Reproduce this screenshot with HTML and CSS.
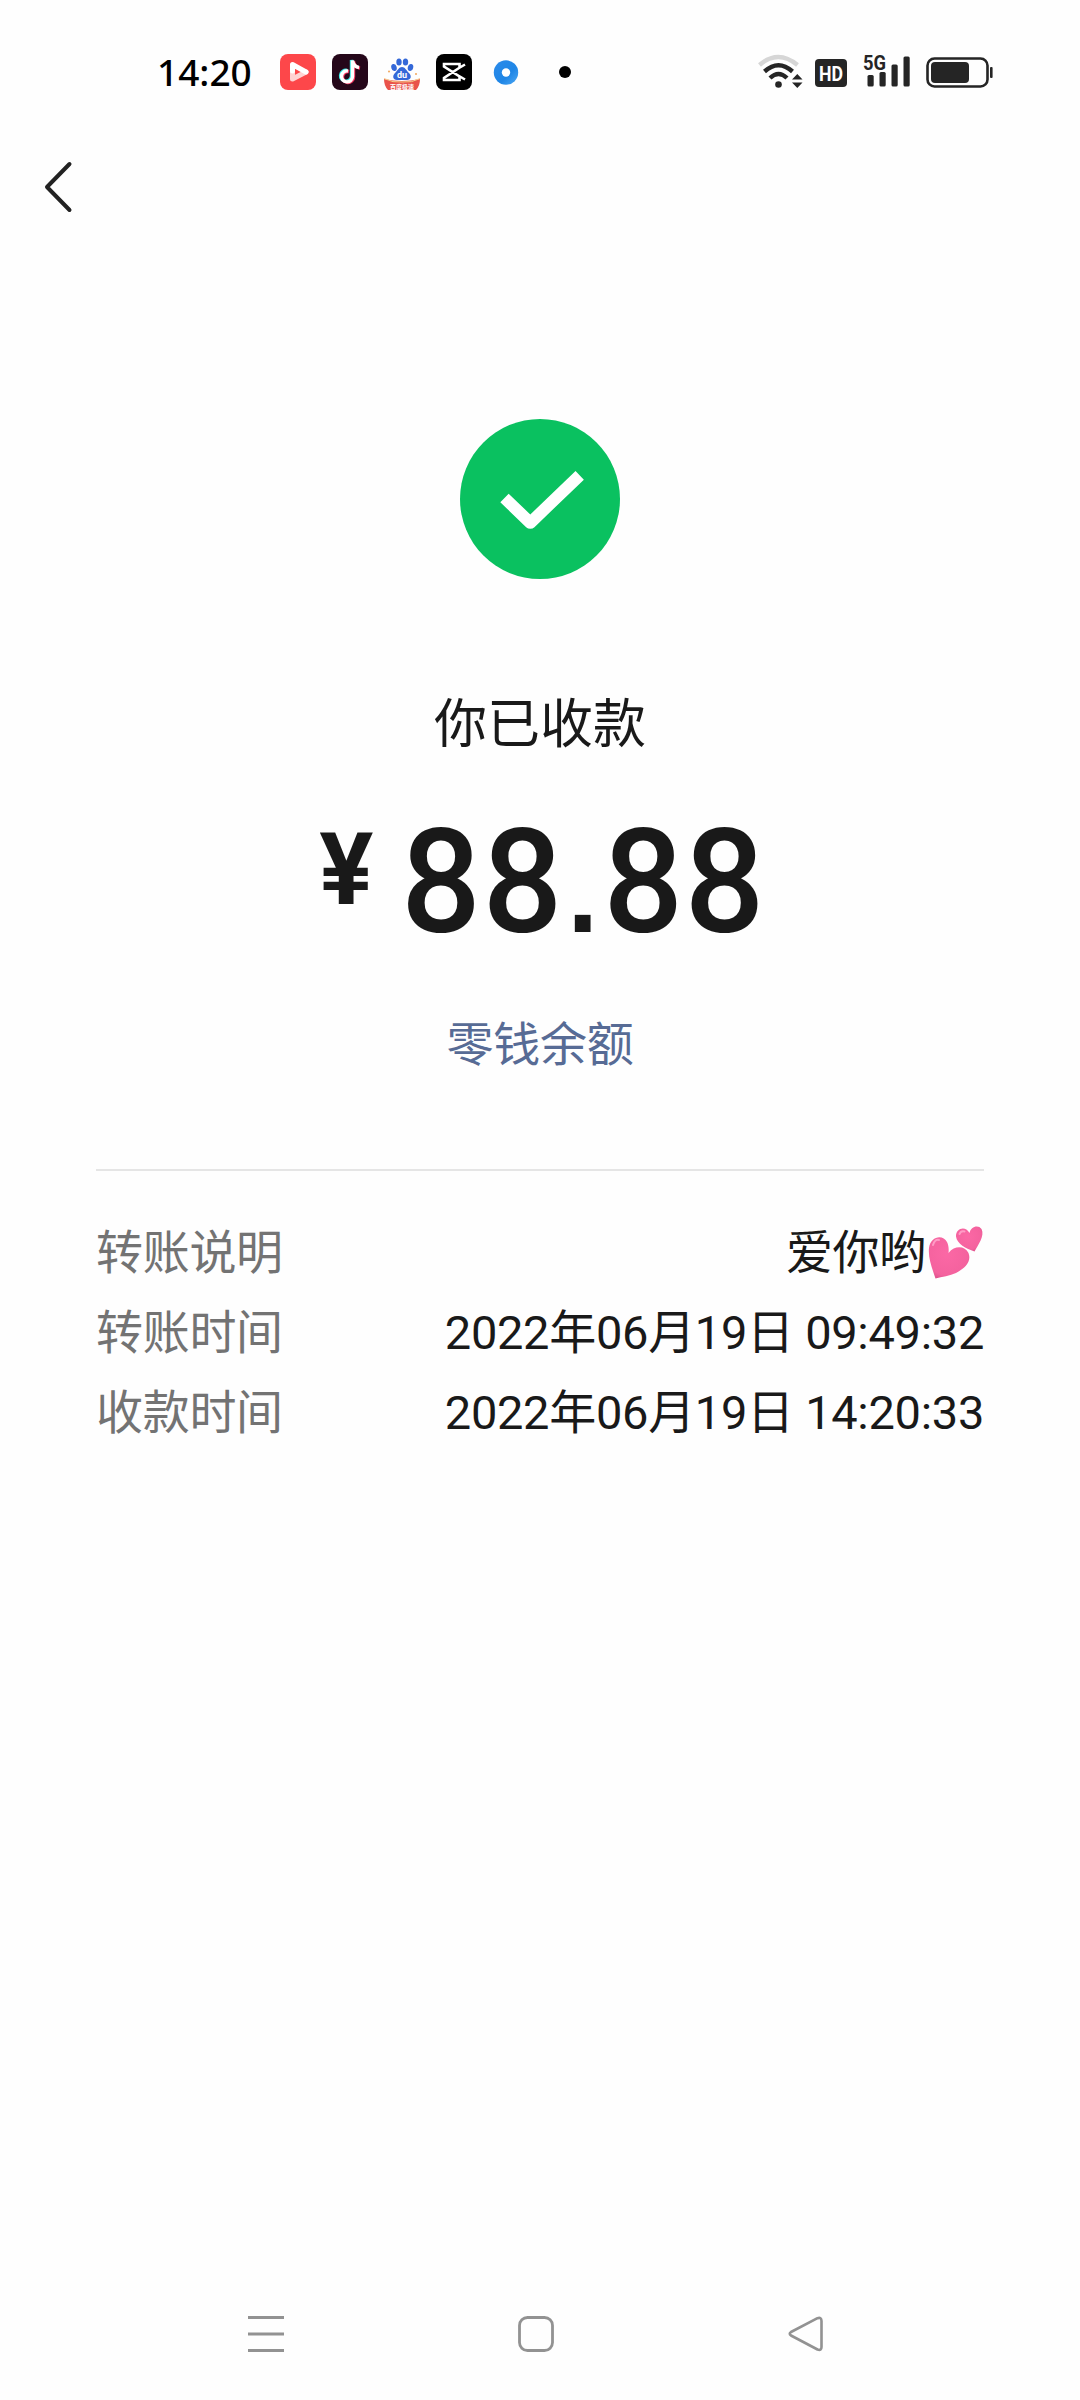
FILE: index.html
```html
<!DOCTYPE html>
<html lang="zh-CN">
<head>
  <meta charset="UTF-8">
  <meta name="viewport" content="width=device-width, initial-scale=1.0">
  <title>收款详情</title>
  <link rel="stylesheet" href="styles.css">
</head>
<body>

  <!-- 状态栏 -->
  <div class="status-bar">
    <span class="time">14:20</span>
    <div class="apps">
      <svg width="36" height="36" viewBox="0 0 36 36">
        <rect width="36" height="36" rx="8" fill="#fd474a"/>
        <path d="M12.500 16V25L26 18" fill="none" stroke="#ffd3d3" stroke-width="5" stroke-linecap="round" stroke-linejoin="round"/>
        <path d="M12.500 17V10.500L26 18" fill="none" stroke="#fff" stroke-width="5" stroke-linecap="round" stroke-linejoin="round"/>
      </svg>
      <svg width="36" height="36" viewBox="0 0 36 36">
        <rect width="36" height="36" rx="8" fill="#25071a"/>
        <g fill="none" stroke-width="3.400">
          <path d="M16 17a5.500 5.500 0 1 0 4.500 5.500V6.500c.5 4 3 6.500 6.500 7" transform="translate(-1 -.6)" stroke="#3de8e4"/>
          <path d="M16 17a5.500 5.500 0 1 0 4.500 5.500V6.500c.5 4 3 6.500 6.500 7" transform="translate(1 .6)" stroke="#f5355f"/>
          <path d="M16 17a5.500 5.500 0 1 0 4.500 5.500V6.500c.5 4 3 6.500 6.500 7" stroke="#fff"/>
        </g>
      </svg>
      <svg width="36" height="36" viewBox="0 0 36 36">
        <g fill="#3468d8">
          <ellipse cx="10" cy="13.500" rx="2.700" ry="3.600" transform="rotate(-15 10 13.500)"/>
          <ellipse cx="15" cy="8" rx="2.700" ry="3.600"/>
          <ellipse cx="21.500" cy="8" rx="2.700" ry="3.600"/>
          <ellipse cx="26.500" cy="13.500" rx="2.700" ry="3.600" transform="rotate(15 26.500 13.500)"/>
          <path d="M18 13c3 0 4 3 7 6c3 3 2 7-2 7H13c-4 0-5-4-2-7c3-3 4-6 7-6z"/>
        </g>
        <text x="18" y="24" class="du">du</text>
        <path d="M0 25Q18 29 36 25Q36 32 32 36H4Q0 32 0 25z" fill="#e9534b"/>
        <path d="M0 24.500Q9 29 18 28Q28 29 36 24.500" fill="none" stroke="#f6cf8c" stroke-width="1"/>
        <text x="18" y="34.500" class="baidu-tag">百度极速</text>
        <circle cx="5" cy="17.500" r="1" fill="#f2a65a"/>
        <circle cx="32" cy="20" r="1" fill="#f2a65a"/>
      </svg>
      <svg width="36" height="36" viewBox="0 0 36 36">
        <rect width="36" height="36" rx="8" fill="#000"/>
        <path d="M29 10.500L23 14L8 24V26H23.500V22.500L8 12.500V10H23.500V13.500M23 22L29 25.500" fill="none" stroke="#fff" stroke-width="2.600"/>
      </svg>
      <svg width="36" height="36" viewBox="0 0 36 36">
        <defs>
          <linearGradient id="ring" x1="0" y1="0" x2="1" y2="1">
            <stop offset="0" stop-color="#2b8bea"/>
            <stop offset=".6" stop-color="#1f86e6"/>
            <stop offset="1" stop-color="#4fa9f4"/>
          </linearGradient>
        </defs>
        <circle cx="18" cy="18.500" r="12.200" fill="url(#ring)"/>
        <circle cx="18" cy="18.500" r="4.200" fill="#fff"/>
      </svg>
      <span class="more-dot"></span>
    </div>
    <div class="signals">
      <svg class="wifi" width="46" height="36" viewBox="0 0 46 36">
        <g fill="none" stroke="#252525" stroke-width="4.400">
          <path d="M1.500 11Q20 -5 39.500 11" stroke="#d6d6d6"/>
          <path d="M6.500 17.500Q20.500 5 34.500 17.500"/>
          <path d="M12 24Q20.500 16 29 24"/>
        </g>
        <circle cx="20.500" cy="30.500" r="3.300" fill="#252525"/>
        <path d="M34 25.500L39.300 20L44.500 25.500zM34 28.500L39.300 34L44.500 28.500z" fill="#252525"/>
      </svg>
      <svg class="hd" width="32" height="28" viewBox="0 0 32 28">
        <rect width="32" height="28" rx="4" fill="#252525"/>
        <text x="4" y="21.500" textLength="24" lengthAdjust="spacingAndGlyphs" class="hd-text">HD</text>
      </svg>
      <svg class="cell" width="48" height="34" viewBox="0 0 48 34">
        <text x="0" y="17" textLength="23" lengthAdjust="spacingAndGlyphs" class="net-text">5G</text>
        <g fill="#252525">
          <rect x="4.500" y="22" width="6.200" height="11.500" rx="1.500"/>
          <rect x="16.500" y="19" width="6.200" height="14.500" rx="1.500"/>
          <rect x="28.500" y="11.500" width="6.200" height="22" rx="1.500"/>
          <rect x="40.500" y="3.500" width="6.200" height="30" rx="1.500"/>
        </g>
      </svg>
      <svg class="battery" width="68" height="32" viewBox="0 0 68 32">
        <rect x="1.500" y="1.500" width="60" height="28" rx="7" fill="none" stroke="#252525" stroke-width="2.600"/>
        <rect x="5" y="5" width="38" height="21" rx="4" fill="#252525"/>
        <rect x="64" y="10" width="2.600" height="11" rx="1" fill="#252525"/>
      </svg>
    </div>
  </div>

  <!-- 返回 -->
  <div class="header">
    <svg width="30" height="54" viewBox="0 0 30 54">
      <path d="M27.500 4L5 27L27.500 50" fill="none" stroke="#222" stroke-width="4" stroke-linecap="round" stroke-linejoin="round"/>
    </svg>
  </div>

  <!-- 收款结果 -->
  <div class="result">
    <svg class="check" width="160" height="160" viewBox="0 0 160 160">
      <circle cx="80" cy="80" r="80" fill="#0ac160"/>
      <path d="M44.500 79L70.300 103.800L119.700 56.300" fill="none" stroke="#fff" stroke-width="12" stroke-linejoin="round"/>
    </svg>
    <div class="title">你已收款</div>
    <div class="amount"><span class="yen">¥</span><span class="num">88<span class="point">.</span>88</span></div>
    <div class="balance">零钱余额</div>
  </div>

  <!-- 转账信息 -->
  <div class="info">
    <div class="row">
      <span class="label">转账说明</span>
      <span class="value note">爱你哟<svg class="hearts" width="56" height="56" viewBox="0 0 56 56">
          <defs>
            <radialGradient id="pink" cx=".45" cy=".4" r=".7">
              <stop offset="0" stop-color="#fb68a5"/>
              <stop offset=".75" stop-color="#f4629e"/>
              <stop offset="1" stop-color="#d44a83"/>
            </radialGradient>
          </defs>
          <path d="M7.500 53.500C4 43 0 33 1 23C2.500 11 15 9 19 17C20.500 20 21 24 20.500 28C27 20 37 21 40.500 28C44 37 36 44 28 48C22 50.500 14 52 7.500 53.500z" fill="url(#pink)"/>
          <path d="M46.500 26.500C38 23.500 29 19 28 11.500C27.500 4 37 0 41.500 8C42.500 2 50 -1 53.500 4C57 11 50 20 46.500 26.500z" fill="url(#pink)"/>
          <path d="M5 20Q7 14 11 15M31.500 9Q33 5.500 36.500 6.500" fill="none" stroke="#ff9cc6" stroke-width="2" stroke-linecap="round"/>
        </svg></span>
    </div>
    <div class="row">
      <span class="label">转账时间</span>
      <span class="value">2022年06月19日 09:49:32</span>
    </div>
    <div class="row">
      <span class="label">收款时间</span>
      <span class="value">2022年06月19日 14:20:33</span>
    </div>
  </div>

  <!-- 系统导航 -->
  <div class="nav-bar">
    <svg width="36" height="36" viewBox="0 0 36 36">
      <path d="M0 1.500H36M0 18H36M0 34.500H36" stroke="#929292" stroke-width="3"/>
    </svg>
    <svg width="36" height="36" viewBox="0 0 36 36">
      <rect x="1.500" y="1.500" width="33" height="33" rx="8" fill="none" stroke="#929292" stroke-width="2.800"/>
    </svg>
    <svg width="36" height="36" viewBox="0 0 36 36">
      <path d="M3 16L29.500 2.200Q33.500 1 33.500 5V31Q33.500 35 29.500 33.500L3 19.500Q.5 17.700 3 16z" fill="none" stroke="#929292" stroke-width="2.600" stroke-linejoin="round"/>
    </svg>
  </div>

</body>
</html>
```
FILE: styles.css
```css
body {
  margin: 0;
  height: 2400px;
  display: flex;
  flex-direction: column;
  background: #fefefe;
  color: #191919;
  font-family: Roboto, "Noto Sans CJK SC", sans-serif;
}

svg {
  display: block;
  flex: none;
  overflow: visible;
}

/* 状态栏 */
.status-bar {
  display: flex;
  align-items: center;
  height: 144px;
  padding: 0 86px 0 157px;
}

.time {
  width: 123px;
  font-family: "Noto Sans", sans-serif;
  font-size: 37px;
  font-weight: 500;
  line-height: 40px;
  color: #000;
}

.apps {
  display: flex;
  align-items: center;
  gap: 16px;
}

.more-dot {
  width: 12px;
  height: 12px;
  margin-left: 19px;
  border-radius: 50%;
  background: #000;
}

.du {
  font: bold 9px Roboto, sans-serif;
  text-anchor: middle;
  fill: #fff;
}

.baidu-tag {
  font: bold 6px "Noto Sans CJK SC", sans-serif;
  text-anchor: middle;
  fill: #fff;
}

.signals {
  display: flex;
  align-items: center;
  margin-left: auto;
}

.hd {
  margin: 2px 0 0 11px;
}

.cell {
  margin: 0 0 4px 16px;
}

.battery {
  margin: 1px 0 0 15px;
}

.hd-text {
  font: bold 21px Roboto, sans-serif;
  fill: #fff;
}

.net-text {
  font: bold 20px Roboto, sans-serif;
  fill: #252525;
}

/* 返回 */
.header {
  display: flex;
  height: 65px;
  padding: 16px 42px 0;
}

/* 收款结果 */
.result {
  display: flex;
  flex-direction: column;
  align-items: center;
  padding-top: 194px;
}

.title {
  margin-top: 111px;
  font-size: 53px;
  line-height: 70px;
}

.amount {
  display: flex;
  margin-top: 62px;
  height: 120px;
  font-weight: 500;
  line-height: 120px;
}

.yen {
  margin-right: 28px;
  font-size: 101px;
  font-weight: 700;
  line-height: 96px;
}

/* 数字略微收窄 */
.num {
  margin-right: -17px;
  font-size: 145px;
  letter-spacing: 1.5px;
  transform: scaleX(.97);
  transform-origin: left;
}

.point {
  display: inline-block;
  width: 39px;
  margin-right: 1.6px;
  font-family: "Liberation Sans", Arial, sans-serif;
  font-size: 115px;
  font-weight: 700;
  letter-spacing: 0;
  line-height: 1;
  text-align: center;
}

.balance {
  margin-top: 73px;
  font-size: 47px;
  line-height: 60px;
  letter-spacing: -0.3px;
  color: #576b95;
}

/* 转账信息 */
.info {
  margin: 94px 96px 0;
  padding-top: 42px;
  border-top: 2px solid #e5e5e5;
}

.row {
  display: flex;
  justify-content: space-between;
  height: 80px;
  font-size: 47px;
  line-height: 80px;
  letter-spacing: -0.3px;
}

.label {
  color: #737373;
}

.note {
  display: flex;
  align-items: center;
}

.hearts {
  margin-left: 2px;
}

/* 系统导航 */
.nav-bar {
  display: flex;
  justify-content: space-between;
  margin-top: auto;
  padding: 0 256px 48px 248px;
}
```
